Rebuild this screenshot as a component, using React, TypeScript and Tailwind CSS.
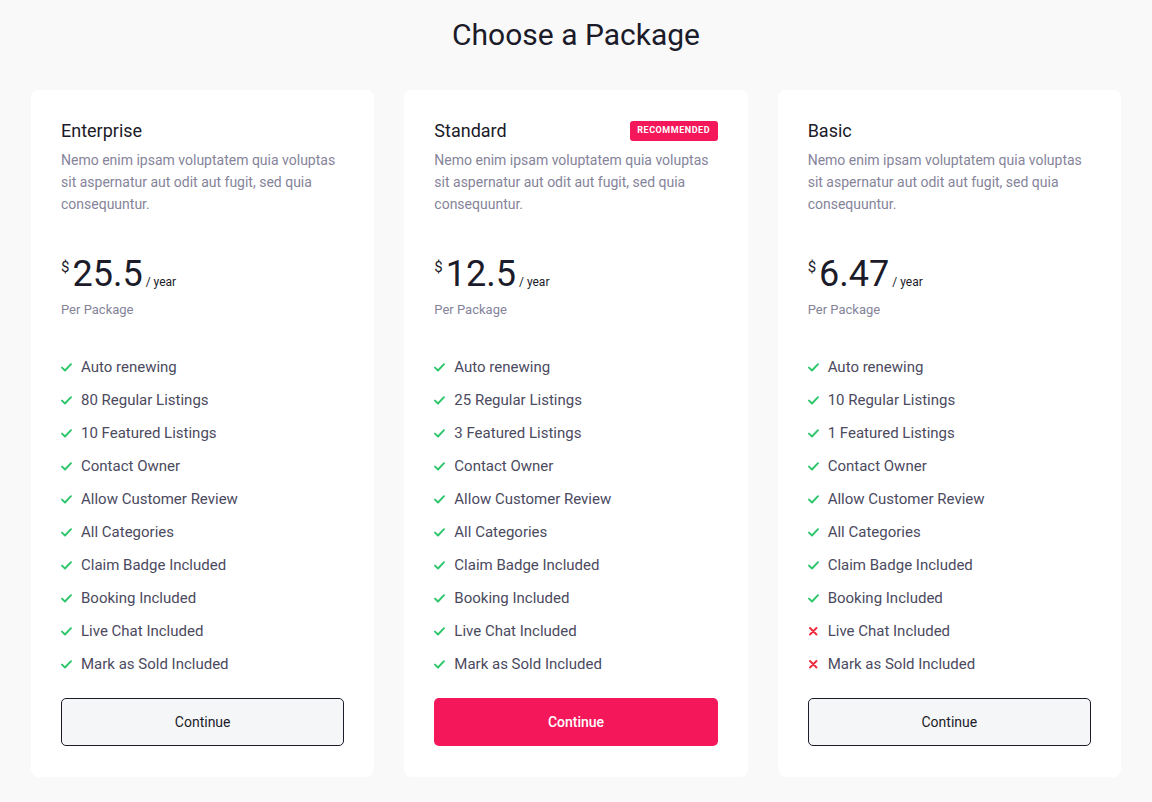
import React from "react";

type Feature = { label: string; ok: boolean };
type Plan = {
  name: string;
  price: string;
  recommended?: boolean;
  features: Feature[];
};

const mk = (reg: number, feat: number, liveOk = true): Feature[] => [
  { label: "Auto renewing", ok: true },
  { label: `${reg} Regular Listings`, ok: true },
  { label: `${feat} Featured Listings`, ok: true },
  { label: "Contact Owner", ok: true },
  { label: "Allow Customer Review", ok: true },
  { label: "All Categories", ok: true },
  { label: "Claim Badge Included", ok: true },
  { label: "Booking Included", ok: true },
  { label: "Live Chat Included", ok: liveOk },
  { label: "Mark as Sold Included", ok: liveOk },
];

const plans: Plan[] = [
  { name: "Enterprise", price: "25.5", features: mk(80, 10) },
  { name: "Standard", price: "12.5", recommended: true, features: mk(25, 3) },
  { name: "Basic", price: "6.47", features: mk(10, 1, false) },
];

const Check = () => (
  <svg width="11" height="9" viewBox="0 0 11 9" fill="none" className="shrink-0">
    <path d="M1 4.6L4 7.5L10 1.2" stroke="#2ec66b" strokeWidth="1.9" strokeLinecap="round" strokeLinejoin="round" />
  </svg>
);

const Cross = () => (
  <svg width="11" height="9" viewBox="0 0 11 9" fill="none" className="shrink-0">
    <path d="M2 1L8.5 7.5M8.5 1L2 7.5" stroke="#ee2a3c" strokeWidth="1.9" strokeLinecap="round" />
  </svg>
);

function Card({ plan }: { plan: Plan }) {
  return (
    <div className="flex-1 bg-white rounded-[8px] pt-[29px] pb-[31px] px-[30px] flex flex-col">
      <div className="flex items-center justify-between h-[24px]">
        <h3 className="text-[18px] leading-[24px] text-[#1b1b29]">{plan.name}</h3>
        {plan.recommended && (
          <span className="bg-[#f4175a] text-white text-[9px] font-bold tracking-[0.06em] rounded-[3px] w-[88px] h-[20px] flex items-center justify-center">
            RECOMMENDED
          </span>
        )}
      </div>
      <p className="mt-[6px] text-[14px] leading-[22px] text-[#85849a]">
        Nemo enim ipsam voluptatem quia voluptas sit aspernatur aut odit aut fugit, sed quia consequuntur.
      </p>
      <div className="mt-[39px] flex items-end h-[40px] text-[#1b1b29]">
        <span className="self-start text-[15px] leading-[15px] mt-[6px] mr-[3px]">$</span>
        <span className="text-[36px] leading-[40px]">{plan.price}</span>
        <span className="text-[12px] leading-[12px] ml-[3px] mb-[6px]">/ year</span>
      </div>
      <div className="mt-[7px] text-[13px] leading-[18px] text-[#85849a]">Per Package</div>
      <ul className="mt-[32px] flex flex-col">
        {plan.features.map((f) => (
          <li key={f.label} className="flex items-center h-[33px] text-[15px] text-[#4b4a60]">
            <span className="w-[20px] flex items-center">{f.ok ? <Check /> : <Cross />}</span>
            <span>{f.label}</span>
          </li>
        ))}
      </ul>
      <button
        className={
          plan.recommended
            ? "mt-[17px] h-[48px] w-full rounded-[5px] bg-[#f4175a] text-white text-[14px] font-medium"
            : "mt-[17px] h-[48px] w-full rounded-[5px] bg-[#f5f6f8] border border-[#1b1b29] text-[#1b1b29] text-[14px]"
        }
      >
        Continue
      </button>
    </div>
  );
}

export default function App() {
  return (
    <div
      className="min-h-[802px] bg-[#f9f9fa] pt-[14px] px-[31px]"
      style={{ fontFamily: "Roboto, 'Liberation Sans', sans-serif" }}
    >
      <h1 className="text-center text-[30px] leading-[42px] text-[#1b1b29]">Choose a Package</h1>
      <div className="mt-[34px] flex gap-[30px]">
        {plans.map((p) => (
          <Card key={p.name} plan={p} />
        ))}
      </div>
    </div>
  );
}
